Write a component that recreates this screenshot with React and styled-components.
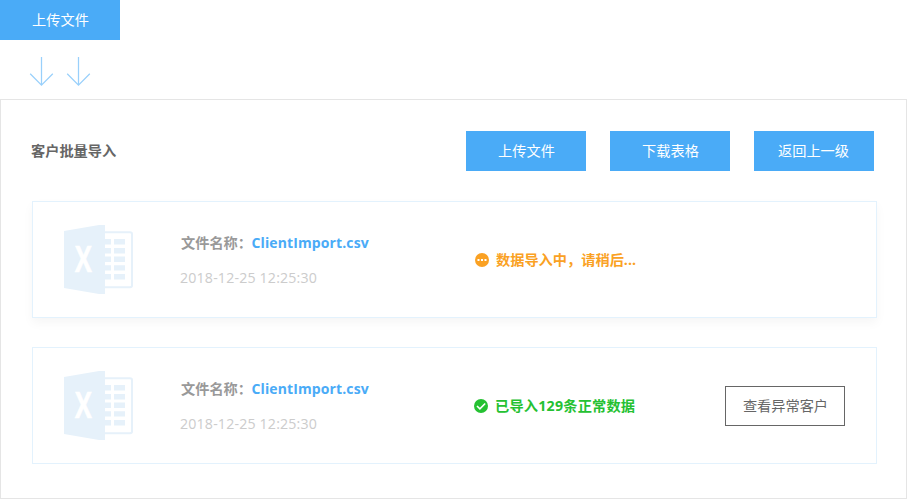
import React from "react";
import styled, { createGlobalStyle } from "styled-components";

const GlobalStyle = createGlobalStyle`
  * { box-sizing: border-box; }
  body {
    margin: 0;
    background: #fff;
    color: #666;
    font: 14.2px/20px "Open Sans", "Noto Sans CJK SC", sans-serif;
  }
`;

const Page = styled.div`
  width: 907px;
  height: 499px;
  display: flex;
  flex-direction: column;
  overflow: hidden;
`;

const Button = styled.button`
  width: 120px;
  height: 40px;
  flex: none;
  padding: ${(p) => (p.$outline ? "1px 0 0 1px" : "0 0 1px 1px")};
  font: inherit;
  white-space: nowrap;
  color: ${(p) => (p.$outline ? "#666" : "#fff")};
  background: ${(p) => (p.$outline ? "#fff" : "#4aabf7")};
  border: ${(p) => (p.$outline ? "1px solid #666" : "0")};
`;

const BackButton = styled(Button)`
  padding: 0 1px 1px 0;
`;

const Arrows = styled.div`
  height: 59px;
  padding: 17px 0 0 29px;
  display: flex;
  gap: 12px;
`;

const Panel = styled.section`
  flex: 1;
  border: 1px solid #e5e5e5;
  padding: 31px 29px 0 31px;
`;

const Header = styled.header`
  height: 40px;
  display: flex;
  align-items: center;
  justify-content: space-between;
  margin-bottom: 30px;
  padding-right: 3px;
`;

const Title = styled.h1`
  margin: 0 0 0 -1px;
  font-size: 14.2px;
  line-height: 20px;
  font-weight: 700;
`;

const Actions = styled.div`
  display: flex;
  gap: 24px;
`;

const Card = styled.article`
  height: 117px;
  border: 1px solid #e3f2fd;
  margin-bottom: 29px;
  display: grid;
  grid-template-columns: 147px 294px 1fr auto;
  align-items: center;
  padding-right: 31px;
  background: #fff;
  box-shadow: ${(p) => (p.$raised ? "0 5px 10px rgba(0, 0, 0, 0.04)" : "none")};
`;

const FileIcon = styled.svg`
  display: block;
  margin: 0 0 1px 31px;
`;

const FileInfo = styled.div`
  display: flex;
  flex-direction: column;
  gap: 15px;
  padding: 2px 0 0 1px;
`;

const FileLabel = styled.div`
  display: flex;
  color: #999;
  font-weight: 700;
`;

const FileName = styled.span`
  color: #4aabf7;
  font-size: 14px;
  letter-spacing: 0.12px;
  margin-left: -0.5px;
`;

const Time = styled.time`
  color: #ccc;
  margin-left: -1px;
  letter-spacing: 0.17px;
`;

const Status = styled.div`
  display: flex;
  align-items: center;
  gap: ${(p) => (p.$indent ? "7px" : "6px")};
  padding-left: ${(p) => (p.$indent ? "1px" : "0")};
  color: ${(p) => p.$color};
  font-weight: 700;
  white-space: nowrap;
`;

const StatusText = styled.span`
  letter-spacing: ${(p) => p.$spacing};
`;

const DownArrow = () => (
  <svg width="25" height="30" viewBox="0 0 25 30" fill="none" stroke="#99d0fb" strokeWidth="1.25">
    <path d="M12.5 0V28.2M1.2 16.7 12.5 28.2 23.8 16.7" />
  </svg>
);

const SpreadsheetIcon = () => (
  <FileIcon width="69" height="69" viewBox="0 0 69 69" fill="#e6f1fa">
    <path d="M0 6 35 0H41V69H35L0 63Z" />
    <path d="M41 7.2H66Q68 7.2 68 9V60.5Q68 62.2 66 62.2H41" fill="none" stroke="#e6f1fa" strokeWidth="2" />
    {[14, 23, 31.5, 40.2, 49].map((y) => (
      <path key={y} d={`M41 ${y}H47V${y + 5.4}H41ZM50 ${y}H61V${y + 5.4}H50Z`} />
    ))}
    <text
      transform="translate(19.3 46.8) scale(.72 1)"
      textAnchor="middle"
      fill="#fff"
      stroke="#fff"
      strokeWidth="0.4"
      fontFamily="Open Sans, sans-serif"
      fontSize="35.8"
      fontWeight="700"
    >
      X
    </text>
  </FileIcon>
);

const PendingIcon = () => (
  <svg width="14" height="15" viewBox="0 0 14 15">
    <circle cx="7" cy="8" r="7" fill="#faa123" />
    <path d="M2.5 7h2v2h-2zM6 7h2v2H6zM9.5 7h2v2h-2z" fill="#fff" />
  </svg>
);

const DoneIcon = () => (
  <svg width="15" height="15" viewBox="0 0 15 15">
    <circle cx="7" cy="8" r="7" fill="#25c132" />
    <path d="m3 8 2.9 2.8 5.3-5.3" fill="none" stroke="#fff" strokeWidth="1.6" />
  </svg>
);

function ImportCard({ raised, color, icon, status, spacing, action }) {
  return (
    <Card $raised={raised}>
      <SpreadsheetIcon />
      <FileInfo>
        <FileLabel>
          文件名称：<FileName>ClientImport.csv</FileName>
        </FileLabel>
        <Time>2018-12-25 12:25:30</Time>
      </FileInfo>
      <Status $color={color} $indent={raised}>
        {icon}
        <StatusText $spacing={spacing}>{status}</StatusText>
      </Status>
      {action}
    </Card>
  );
}

export default function App() {
  return (
    <Page>
      <GlobalStyle />
      <Button>上传文件</Button>
      <Arrows>
        <DownArrow />
        <DownArrow />
      </Arrows>
      <Panel>
        <Header>
          <Title>客户批量导入</Title>
          <Actions>
            <Button>上传文件</Button>
            <Button>下载表格</Button>
            <BackButton>返回上一级</BackButton>
          </Actions>
        </Header>
        <ImportCard
          raised
          color="#faa123"
          icon={<PendingIcon />}
          status="数据导入中，请稍后..."
          spacing="0.02px"
        />
        <ImportCard
          color="#25c132"
          icon={<DoneIcon />}
          status="已导入129条正常数据"
          spacing="0.22px"
          action={<Button $outline>查看异常客户</Button>}
        />
      </Panel>
    </Page>
  );
}
